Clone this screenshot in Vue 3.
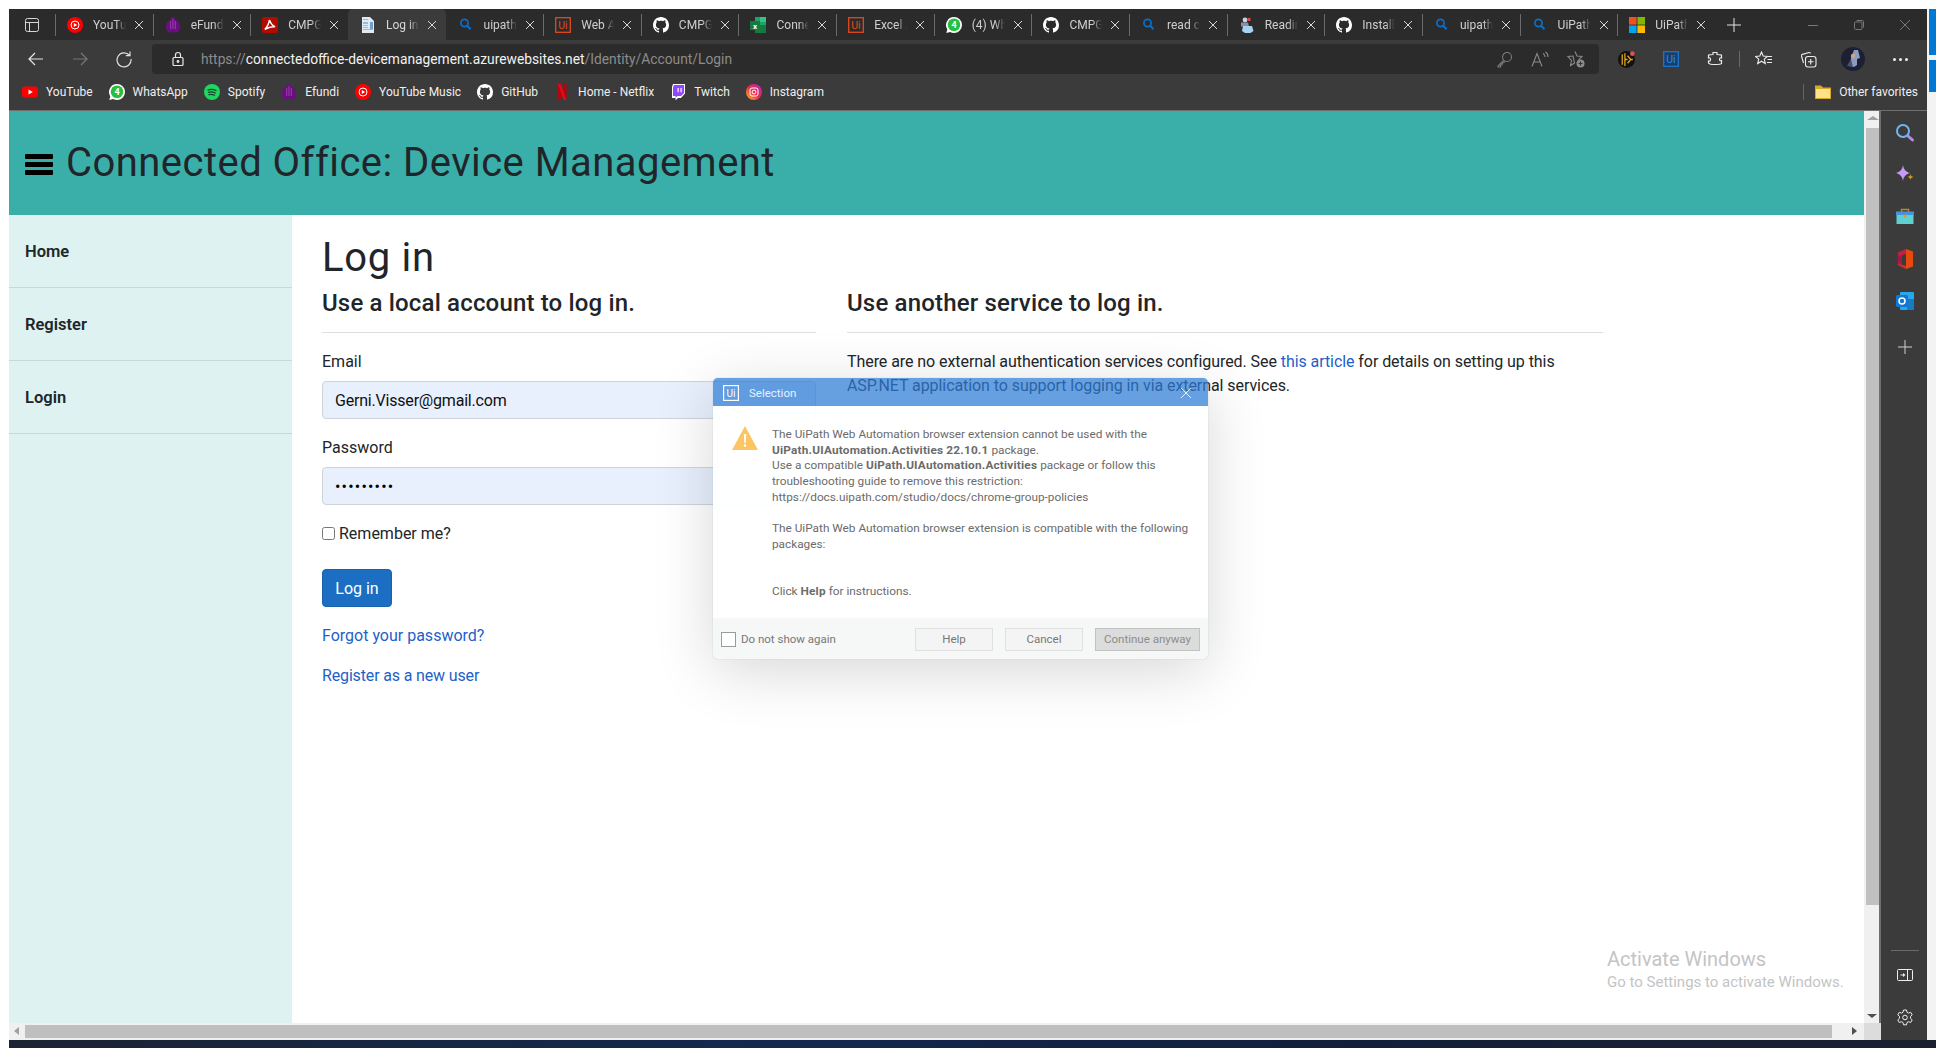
<script setup>
const gh = '<path fill="#fff" d="M8 0C3.58 0 0 3.58 0 8c0 3.54 2.29 6.53 5.47 7.59.4.07.55-.17.55-.38 0-.19-.01-.82-.01-1.49-2.01.37-2.53-.49-2.69-.94-.09-.23-.48-.94-.82-1.13-.28-.15-.68-.52-.01-.53.63-.01 1.08.58 1.23.82.72 1.21 1.87.87 2.33.66.07-.52.28-.87.51-1.07-1.78-.2-3.64-.89-3.64-3.95 0-.87.31-1.59.82-2.15-.08-.2-.36-1.02.08-2.12 0 0 .67-.21 2.2.82.64-.18 1.32-.27 2-.27.68 0 1.36.09 2 .27 1.53-1.04 2.2-.82 2.2-.82.44 1.1.16 1.92.08 2.12.51.56.82 1.27.82 2.15 0 3.07-1.87 3.75-3.65 3.95.29.25.54.73.54 1.48 0 1.07-.01 1.93-.01 2.2 0 .21.15.46.55.38A8.013 8.013 0 0016 8c0-4.42-3.58-8-8-8z"/>'
const icons = {
  ytm: '<circle cx="8" cy="8" r="8" fill="#f00"/><circle cx="8" cy="8" r="4" fill="none" stroke="#fff"/><path fill="#fff" d="M6.8 5.9 10.2 8l-3.4 2.1z"/>',
  yt: '<rect y="2.5" width="16" height="11" rx="3" fill="#f00"/><path fill="#fff" d="M6.5 5.5 10.8 8l-4.3 2.5z"/>',
  efundi: '<path fill="#6a0f80" d="M8 0c1.6 0 2.5 1.5 2.5 3.3 2.4.2 4 2 4.5 5 .5 3.2-.6 6.700-3.200 7.200-1.400.3-2.800-.2-3.800-1.200-1 1-2.400 1.500-3.800 1.200C2.100 15 .5 11.500 1 8.300c.5-3 2.100-4.800 4.500-5C5.500 1.500 6.400 0 8 0z"/><path stroke="#a24bb5" stroke-width=".8" fill="none" d="M5.700 4v8M8 2v10M10.300 4v8"/>',
  pdf: '<rect width="16" height="16" rx="2" fill="#b30b00"/><path fill="none" stroke="#fff" stroke-width="1.500" d="M7.400 3c-.2 2.700-2 6.500-4.600 9.400 3-1.900 7.300-3 10.300-2.600C10.600 8.800 8.600 6 7.400 3z"/>',
  doc: '<path fill="#dfeaf5" d="M2 0h8l4 4v12H2z"/><path fill="#9db9d8" d="M3 2h5v1H3zM3 5h5v2H3zM3 8h5v1H3zM3 10h5v1H3zM3 12h10v1H3z"/><path fill="#6f9fd0" d="M10 5h3v7h-3z"/>',
  search: '<circle cx="6.500" cy="6" r="3.600" fill="none" stroke="#0a6fc9" stroke-width="1.700"/><path stroke="#0a6fc9" stroke-width="2" d="m9.200 8.800 3.300 3.400"/>',
  ui: '<rect x=".7" y=".7" width="14.600" height="14.600" fill="none" stroke="#e3491d" stroke-width="1.300"/><text x="8" y="12" font-size="10.500" text-anchor="middle" fill="#e3491d" font-family="Roboto, sans-serif">Ui</text>',
  github: gh,
  excel: '<path fill="#21a366" d="M5 0h11v16H5z"/><path fill="#107c41" d="M5 8h11v8H5z"/><path fill="#33c481" d="M10 0h6v5h-6z"/><rect y="4" width="10" height="9" fill="#107c41"/><text x="5" y="11.500" font-size="8" font-weight="700" text-anchor="middle" fill="#fff" font-family="Roboto, sans-serif">x</text>',
  wa: '<path fill="#fff" d="M8 0a8 8 0 0 1 0 16c-1.400 0-2.700-.4-3.900-1L.3 16l1-3.700A8 8 0 0 1 8 0z"/><circle cx="8" cy="7.800" r="6.300" fill="#25c03d"/><text x="8" y="11" font-size="9" font-weight="700" text-anchor="middle" fill="#fff" font-family="Roboto, sans-serif">4</text>',
  reading: '<circle cx="6" cy="3" r="2.400" fill="#c9d4e2"/><path fill="#8a8fa3" d="M2 5.500h7l1 4H2z"/><path fill="#d94b4b" d="M8.500 1h3v3h-3z"/><path fill="#a7d3f2" d="M4 9h9l1.500 5-3 2H6l-3-2z"/>',
  ms: '<path fill="#f25022" d="M0 0h7.600v7.600H0z"/><path fill="#7fba00" d="M8.400 0H16v7.600H8.400z"/><path fill="#00a4ef" d="M0 8.400h7.600V16H0z"/><path fill="#ffb900" d="M8.400 8.400H16V16H8.400z"/>',
  spotify: '<circle cx="8" cy="8" r="8" fill="#1ed760"/><path fill="none" stroke="#15432a" stroke-width="1.300" stroke-linecap="round" d="M4 5.800c2.700-.8 5.600-.6 8 .7M4.500 8.300c2.300-.6 4.700-.4 6.800.7M5 10.600c1.900-.5 3.800-.3 5.500.6"/>',
  netflix: '<path fill="#b1060f" d="M4 0h3v16l-3 .4z"/><path fill="#b1060f" d="M9.500 0h3v16.400l-3-.4z"/><path fill="#e50914" d="M4 0h3l5.500 16.400-3-.4z"/>',
  twitch: '<path fill="#fff" d="M3 0h12v9.500L11 14H8l-2.500 2.300V14H2V3z"/><path fill="#9146ff" d="M4 1h10v8l-3 3H7.500l-2 1.700V12H3V3.500zM7.500 4v4.300h1.200V4zm3 0v4.300h1.200V4z"/>',
  ig: '<defs><linearGradient id="igg" x1="0" y1="1" x2="1" y2="0"><stop offset="0" stop-color="#fdc21f"/><stop offset=".5" stop-color="#f0264f"/><stop offset="1" stop-color="#a02fc9"/></linearGradient></defs><circle cx="8" cy="8" r="8" fill="url(#igg)"/><rect x="4" y="4" width="8" height="8" rx="2" fill="none" stroke="#fff"/><circle cx="8" cy="8" r="1.900" fill="none" stroke="#fff"/>',
}

const tabs = [
  { icon: 'ytm', title: 'YouTube' },
  { icon: 'efundi', title: 'eFundi' },
  { icon: 'pdf', title: 'CMPG 323' },
  { icon: 'doc', title: 'Log in - Connected', active: true },
  { icon: 'search', title: 'uipath web' },
  { icon: 'ui', title: 'Web Automation' },
  { icon: 'github', title: 'CMPG-323' },
  { icon: 'excel', title: 'Connected' },
  { icon: 'ui', title: 'Excel Automation' },
  { icon: 'wa', title: '(4) WhatsApp' },
  { icon: 'github', title: 'CMPG-323' },
  { icon: 'search', title: 'read cell' },
  { icon: 'reading', title: 'Reading' },
  { icon: 'github', title: 'Install' },
  { icon: 'search', title: 'uipath ext' },
  { icon: 'search', title: 'UiPath ext' },
  { icon: 'ms', title: 'UiPath Web' },
]

const bookmarks = [
  { icon: 'yt', label: 'YouTube' },
  { icon: 'wa', label: 'WhatsApp' },
  { icon: 'spotify', label: 'Spotify' },
  { icon: 'efundi', label: 'Efundi' },
  { icon: 'ytm', label: 'YouTube Music' },
  { icon: 'github', label: 'GitHub' },
  { icon: 'netflix', label: 'Home - Netflix' },
  { icon: 'twitch', label: 'Twitch' },
  { icon: 'ig', label: 'Instagram' },
]

const navLinks = ['Home', 'Register', 'Login']
</script>

<template>
  <div class="screen">
    <div class="window">
      <div class="tabstrip">
        <div class="tab-actions">
          <svg width="16" height="16" viewBox="0 0 16 16" fill="none" stroke="#d6d6d6"><rect x="1.500" y="1.500" width="13" height="13" rx="2"/><path d="M1.500 5.500h13M5.500 5.500v9"/></svg>
        </div>
        <div v-for="(t, i) in tabs" :key="i" class="tab" :class="{ active: t.active }">
          <svg class="tab-icon" width="16" height="16" viewBox="0 0 16 16" v-html="icons[t.icon]"></svg>
          <span class="tab-title">{{ t.title }}</span>
          <svg class="tab-close" width="10" height="10" viewBox="0 0 10 10" stroke="#d8d8d8"><path d="M1 1l8 8M9 1l-8 8"/></svg>
        </div>
        <svg class="new-tab" width="16" height="16" viewBox="0 0 16 16" stroke="#e4e4e4"><path d="M8 1v14M1 8h14"/></svg>
        <div class="win-controls">
          <svg width="12" height="12" viewBox="0 0 12 12" stroke="#777"><path d="M1 6.500h10"/></svg>
          <svg width="12" height="12" viewBox="0 0 12 12" stroke="#777" fill="none"><rect x="1.500" y="3" width="7.500" height="7.500" rx="1"/><path d="M3.500 1.500h6a1 1 0 0 1 1 1v6"/></svg>
          <svg width="12" height="12" viewBox="0 0 12 12" stroke="#777"><path d="M1 1l10 10M11 1L1 11"/></svg>
        </div>
      </div>

      <div class="toolbar">
        <div class="nav-buttons">
          <svg width="18" height="18" viewBox="0 0 18 18" fill="none" stroke="#e6e6e6" stroke-width="1.200"><path d="M16 9H2M8 3 2 9l6 6"/></svg>
          <svg width="18" height="18" viewBox="0 0 18 18" fill="none" stroke="#777" stroke-width="1.200"><path d="M2 9h14M10 3l6 6-6 6"/></svg>
          <svg width="18" height="18" viewBox="0 0 18 18" fill="none" stroke="#e0e0e0" stroke-width="1.200"><path d="M14.500 5.500A7 7 0 1 0 16 9M15 1.500v4.200h-4.200"/></svg>
        </div>
        <div class="address">
          <svg width="14" height="16" viewBox="0 0 14 16" fill="none" stroke="#e8e8e8" stroke-width="1.200"><rect x="2" y="6.500" width="10" height="8" rx="1"/><path d="M4.500 6.500V4a2.500 2.500 0 0 1 5 0v2.500"/><circle cx="7" cy="10.500" r=".8" fill="#e8e8e8"/></svg>
          <div class="url"><span class="dim">https://</span>connectedoffice-devicemanagement.azurewebsites.net<span class="dim">/Identity/Account/Login</span></div>
          <div class="address-icons">
            <svg width="17" height="17" viewBox="0 0 17 17" fill="none" stroke="#7d7d7d" stroke-width="1.100"><circle cx="11" cy="6" r="4.500"/><path d="M7.800 9.200 2 15v1h2.500v-2H6v-1.500l3-2"/></svg>
            <svg width="18" height="17" viewBox="0 0 18 17" fill="none" stroke="#8a8a8a" stroke-width="1.100"><path d="M1 15.500 6 2.500l5 13M3 11h6M12 2.500c1.400.7 2.100 1.900 2 3.500M14.500 1c1.800 1.100 2.600 2.700 2.400 5"/></svg>
            <svg width="18" height="18" viewBox="0 0 18 18" fill="none" stroke="#8a8a8a" stroke-width="1.100"><path d="M8 1.500 10 6l5 .5-3.500 3.300M7.500 13l-4 2.500 1-5L1 6.500 6 6z"/><circle cx="13.500" cy="13.500" r="4" fill="#8a8a8a" stroke="none"/><path stroke="#333" d="M13.500 11.500v4M11.500 13.500h4"/></svg>
          </div>
        </div>
        <div class="tool-icons">
          <svg class="t1" width="17" height="17" viewBox="0 0 16 16"><circle cx="8" cy="8" r="8" fill="#111"/><path fill="none" stroke="#e0a81c" stroke-width="1.200" d="M4 3v10M6.500 2v12M9 8 6.500 8M9 4.500 12 8l-3 3.500M12 8h2"/><circle cx="13.500" cy="2.500" r="2.200" fill="#e64a5b"/></svg>
          <svg class="t2" width="16" height="16" viewBox="0 0 16 16"><rect x=".7" y=".7" width="14.600" height="14.600" fill="#1c3d66" stroke="#1976d2" stroke-width="1.300"/><text x="8" y="12" font-size="10.500" text-anchor="middle" fill="#2b8af0" font-family="Roboto, sans-serif">Ui</text></svg>
          <svg class="t3" width="16" height="16" viewBox="0 0 16 16" fill="none" stroke="#ececec" stroke-width="1.200"><path d="M6 1.500h4v2c2 0 3.500 0 4.500.5v3c-1.500-.5-2 .3-2 1.300s.5 1.800 2 1.300v3c-1 .8-2.500.9-4.500.9H6c-2 0-3.500-.5-4.500-1.400V10c1.500.5 2-.3 2-1.500S3 6.500 1.500 7V4c1-.5 2.500-.5 4.500-.5z"/></svg>
          <span class="tool-sep"></span>
          <svg class="t4" width="18" height="16" viewBox="0 0 18 16" fill="none" stroke="#ececec" stroke-width="1.100"><path d="M6.500 1 8.200 5l4.300.4-3.200 2.800 1 4.300L6.500 10.200 2.700 12.500l1-4.300L.5 5.400 4.800 5zM13 5.500h4M12.500 8.500h4.500M12 11.500h5"/></svg>
          <svg class="t5" width="17" height="17" viewBox="0 0 17 17" fill="none" stroke="#ececec" stroke-width="1.100"><rect x="5.500" y="5.500" width="10.500" height="10.500" rx="2.500"/><path d="M10.700 8v5.500M8 10.700h5.500M3.500 12 1.500 5c-.2-.8.200-1.400.9-1.600L9 1.500c.7-.2 1.300.2 1.500 1"/></svg>
          <svg class="t6" width="24" height="24" viewBox="0 0 24 24"><circle cx="12" cy="12" r="12" fill="#1d1f33"/><path fill="#8f9cc2" d="M13 3h4l2 8-3 1v6l-3 2-4-1 1-8z"/><circle cx="12" cy="9" r="2.200" fill="#c9a78f"/><path fill="#4a5270" d="M6 19l4-7 2 8z"/></svg>
          <div class="dots"><i></i><i></i><i></i></div>
        </div>
      </div>

      <div class="bookmarks">
        <div v-for="b in bookmarks" :key="b.label" class="bookmark">
          <svg width="16" height="16" viewBox="0 0 16 16" v-html="icons[b.icon]"></svg>
          <span>{{ b.label }}</span>
        </div>
        <span class="fav-sep"></span>
        <div class="bookmark other">
          <svg width="16" height="16" viewBox="0 0 16 16"><path fill="#d9a72c" d="M0 1.500h6l2 2h8v11.500H0z"/><path fill="#fde28a" d="M1 5h14v9H1z"/></svg>
          <span>Other favorites</span>
        </div>
      </div>

      <div class="stage">
        <div class="viewport">
          <div class="view-row">
            <div class="page">
              <header class="app-header">
                <div class="burger"><i></i><i></i><i></i></div>
                <h1 class="app-title">Connected Office: Device Management</h1>
              </header>
              <div class="page-body">
                <nav class="side-nav">
                  <a v-for="n in navLinks" :key="n" class="nav-link">{{ n }}</a>
                </nav>
                <main class="content">
                  <h1 class="page-title">Log in</h1>
                  <div class="columns">
                    <section class="col-left">
                      <h4>Use a local account to log in.</h4>
                      <hr />
                      <label class="field-label">Email</label>
                      <div class="field email">Gerni.Visser@gmail.com</div>
                      <label class="field-label">Password</label>
                      <div class="field pass">•••••••••</div>
                      <label class="remember"><input type="checkbox" /> Remember me?</label>
                      <button class="btn-login">Log in</button>
                      <a class="link forgot">Forgot your password?</a>
                      <a class="link register">Register as a new user</a>
                    </section>
                    <section class="col-right">
                      <h4>Use another service to log in.</h4>
                      <hr />
                      <p>There are no external authentication services configured. See <a class="link inline">this article</a> for details on setting up this ASP.NET application to support logging in via external services.</p>
                    </section>
                  </div>
                </main>
              </div>
            </div>
            <div class="vscroll">
              <span class="arrow up"></span>
              <div class="vthumb"></div>
              <span class="arrow down"></span>
            </div>
          </div>
          <div class="hscroll">
            <span class="arrow left"></span>
            <div class="hthumb"></div>
            <span class="arrow right"></span>
            <div class="corner"></div>
          </div>
        </div>

        <aside class="edge-bar">
          <svg width="20" height="20" viewBox="0 0 20 20" fill="none"><circle cx="8" cy="8" r="6" stroke="#6fb6f2" stroke-width="2"/><path stroke="#b48ce8" stroke-width="3" stroke-linecap="round" d="m13 13 4.500 4"/></svg>
          <svg width="20" height="20" viewBox="0 0 20 20"><path fill="#c59bf5" d="M8 0c.7 4.500 2.500 6.500 7 8-4.500 1.500-6.300 3.500-7 8-.7-4.500-2.500-6.500-7-8 4.500-1.500 6.300-3.500 7-8z"/><path fill="#d19a1a" d="M15.500 9c.2 1.700 1 2.500 3 3-2 .5-2.800 1.300-3 3-.2-1.700-1-2.500-3-3 2-.5 2.800-1.300 3-3z"/></svg>
          <svg width="20" height="20" viewBox="0 0 20 20"><path fill="none" stroke="#b78a2c" stroke-width="1.500" d="M6.500 5V2.500h7V5"/><path fill="#5fd0d2" d="M1.500 8h17v9h-17z"/><path fill="#4a90e0" d="M1 4.500h18V8H1z"/><circle cx="10" cy="9" r="1.500" fill="#e69a1c"/></svg>
          <svg width="20" height="20" viewBox="0 0 20 20"><path fill="#e64a0c" d="M11 0l7 2.500v15L11 20z"/><path fill="#c41e4a" d="M11 0 3 3.500v12l4-1.500V6l4-1z"/><path fill="#8f1440" d="M2 6v8l5-1V7z" opacity=".6"/><path fill="#e02a2a" d="M2 15.500 11 20v-3l-6-2z"/></svg>
          <svg width="20" height="20" viewBox="0 0 20 20"><rect x="5" y="1" width="14" height="18" rx="1" fill="#28a8ea"/><path fill="#0a5fa8" d="M12 8h7v11h-7z" opacity=".6"/><rect x="1" y="4" width="12" height="12" rx="1.500" fill="#0f78d4"/><circle cx="7" cy="10" r="3" fill="none" stroke="#fff" stroke-width="1.500"/></svg>
          <svg class="edge-plus" width="14" height="14" viewBox="0 0 14 14" stroke="#d0d0d0"><path d="M7 0v14M0 7h14"/></svg>
          <div class="edge-bottom">
            <span class="edge-rule"></span>
            <svg width="16" height="14" viewBox="0 0 16 14" fill="none" stroke="#eee"><rect x=".5" y="1.500" width="15" height="11" rx="1"/><path d="M10.500 1.500v11"/><path fill="#eee" d="M3.500 6.500h2.500V5l2.500 2-2.500 2V7.500H3.500z" stroke="none"/></svg>
            <svg width="18" height="18" viewBox="0 0 18 18" fill="none" stroke="#eee"><path d="M7.500 1h3l.5 2.300 1.500.8 2.200-.8 1.500 2.600-1.700 1.600v1.800l1.700 1.600-1.500 2.600-2.200-.8-1.500.8-.5 2.300h-3L7 13.500l-1.500-.8-2.200.8-1.500-2.600 1.700-1.600V7.500L1.800 5.900l1.500-2.600 2.200.8L7 3.300z"/><circle cx="9" cy="8.500" r="2.300"/></svg>
          </div>
        </aside>
      </div>
    </div>

    <div class="desktop-edge"><i></i><i></i></div>
    <div class="taskbar"></div>

    <div class="watermark">
      <div class="wm-title">Activate Windows</div>
      <div class="wm-sub">Go to Settings to activate Windows.</div>
    </div>

    <div class="dialog">
      <div class="dlg-title">
        <svg width="16" height="16" viewBox="0 0 16 16"><rect x=".6" y=".6" width="14.800" height="14.800" fill="none" stroke="#fff" stroke-width="1.200"/><text x="8" y="12" font-size="10" text-anchor="middle" fill="#fff" font-family="Roboto, sans-serif">Ui</text></svg>
        <span>Selection</span>
        <svg class="dlg-close" width="12" height="12" viewBox="0 0 12 12" stroke="#fff" opacity=".85"><path d="M1 1l10 10M11 1L1 11"/></svg>
      </div>
      <div class="dlg-body">
        <svg class="warn" width="26" height="24" viewBox="0 0 26 24"><path fill="#fcc562" d="M13 0 26 24H0z"/><path fill="#fff" d="M11.800 8h2.400l-.5 9h-1.400zM13 18.200a1.300 1.300 0 1 1 0 2.600 1.300 1.300 0 0 1 0-2.600z"/></svg>
        <div class="dlg-text">
          <p>The UiPath Web Automation browser extension cannot be used with the<br /><b>UiPath.UIAutomation.Activities 22.10.1</b> package.<br />Use a compatible <b>UiPath.UIAutomation.Activities</b> package or follow this<br />troubleshooting guide to remove this restriction:<br />https://docs.uipath.com/studio/docs/chrome-group-policies</p>
          <p class="gap1">The UiPath Web Automation browser extension is compatible with the following<br />packages:</p>
          <p class="gap2">Click <b>Help</b> for instructions.</p>
        </div>
      </div>
      <div class="dlg-footer">
        <span class="dlg-check"></span>
        <span class="dlg-check-label">Do not show again</span>
        <button class="dlg-btn help">Help</button>
        <button class="dlg-btn">Cancel</button>
        <button class="dlg-btn wide">Continue anyway</button>
      </div>
    </div>
  </div>
</template>

<style>
html, body { margin: 0; background: #fff; overflow: hidden; }
</style>

<style scoped>
.screen {
  position: relative;
  width: 1936px;
  height: 1048px;
  overflow: hidden;
  background: #fff;
  display: grid;
  grid-template-columns: 1918px 9px;
  grid-template-rows: 1031px 8px;
  padding: 9px 0 0 9px;
  box-sizing: border-box;
  font-family: Roboto, "Noto Sans", sans-serif;
  color: #212529;
}
.window { display: flex; flex-direction: column; background: #3b3b3b; min-height: 0; }

/* tabs */
.tabstrip { height: 31px; background: #2b2b2b; display: flex; align-items: center; position: relative; }
.tab-actions { width: 46px; display: flex; padding-left: 15px; box-sizing: border-box; }
.tab {
  width: 97.65px;
  height: 22px;
  flex: none;
  display: flex;
  align-items: center;
  box-sizing: border-box;
  padding-left: 11px;
  border-left: 1px solid #6a6a6a;
  color: #cfcfcf;
  font-size: 12px;
  position: relative;
}
.tab.active { background: #3b3b3b; height: 31px; border-radius: 5px 5px 0 0; border-left-color: transparent; color: #d8d8d8; }
.tab.active + .tab { border-left-color: transparent; }
.tab-icon { flex: none; }
.tab-title {
  margin-left: 10px;
  width: 33px;
  white-space: nowrap;
  overflow: hidden;
  -webkit-mask-image: linear-gradient(to right, #000 70%, transparent);
  mask-image: linear-gradient(to right, #000 70%, transparent);
}
.tab-close { margin-left: 8px; flex: none; }
.new-tab { margin-left: 11px; box-shadow: -11px 0 0 -10px #6a6a6a; }
.win-controls { position: absolute; left: 1798px; top: 10px; display: flex; gap: 34px; }

/* toolbar */
.toolbar { height: 34px; display: flex; align-items: flex-end; }
.nav-buttons { width: 143px; height: 30px; display: flex; align-items: center; gap: 26px; padding-left: 18px; box-sizing: border-box; }
.address {
  width: 1447px;
  height: 30px;
  background: #2b2b2b;
  border-radius: 4px;
  display: flex;
  align-items: center;
  padding-left: 19px;
  box-sizing: border-box;
}
.url { margin-left: 16px; font-size: 13.8px; color: #f2f2f2; white-space: nowrap; }
.dim { color: #8c8c8c; }
.address-icons { margin-left: auto; display: flex; align-items: center; gap: 18px; padding-right: 14px; }
.tool-icons { flex: 1; height: 30px; display: flex; align-items: center; position: relative; }
.t1 { margin-left: 19px; }
.t2 { margin-left: 28px; }
.t3 { margin-left: 28px; }
.tool-sep { width: 1px; height: 16px; background: #6a6a6a; margin-left: 16px; }
.t4 { margin-left: 15px; }
.t5 { margin-left: 27px; }
.t6 { margin-left: 24px; }
.dots { display: flex; gap: 3px; margin-left: 28px; }
.dots i { width: 3px; height: 3px; border-radius: 50%; background: #eee; }

/* favorites */
.bookmarks {
  height: 37px;
  display: flex;
  align-items: center;
  padding-left: 13px;
  gap: 16px;
  box-sizing: border-box;
  border-bottom: 1px solid #6f6f6f;
  font-size: 12px;
  color: #efefef;
}
.bookmark { display: flex; align-items: center; gap: 8px; white-space: nowrap; }
.fav-sep { width: 1px; height: 16px; background: #666; margin-left: auto; }
.bookmark.other { margin-left: -5px; margin-right: 9px; gap: 8px; }

/* viewport */
.stage { flex: 1; display: flex; min-height: 0; }
.viewport { width: 1872px; display: flex; flex-direction: column; background: #fff; }
.view-row { flex: 1; display: flex; min-height: 0; }
.page { flex: 1; display: flex; flex-direction: column; min-width: 0; }
.app-header { height: 104px; background: #3aafa9; display: flex; align-items: center; padding-left: 16px; flex: none; box-sizing: border-box; }
.burger { width: 28px; display: flex; flex-direction: column; gap: 3.5px; margin-right: 13px; margin-top: 3px; }
.burger i { display: block; height: 4.500px; border-radius: 1px; background: #000; }
.app-title { margin: 0; font-size: 40px; font-weight: 400; line-height: 48px; color: #212529; letter-spacing: .46px; white-space: nowrap; }
.page-body { flex: 1; display: flex; min-height: 0; }
.side-nav { width: 283px; background: #def2f1; display: flex; flex-direction: column; flex: none; }
.nav-link {
  height: 73px;
  box-sizing: border-box;
  border-bottom: 1px solid #c6d9d8;
  padding: 1px 0 0 16px;
  display: flex;
  align-items: center;
  font-size: 16.500px;
  font-weight: 600;
  color: #212529;
}
.content { flex: 1; padding: 19px 0 0 30px; }
.page-title { margin: 0 0 7px; font-size: 40px; line-height: 48px; font-weight: 400; letter-spacing: .7px; }
.columns { display: flex; gap: 31px; }
.col-left { width: 494px; display: flex; flex-direction: column; align-items: flex-start; }
.col-right { width: 756px; }
h4 { margin: 0; font-size: 24px; line-height: 29px; font-weight: 500; letter-spacing: .17px; }
hr { width: 100%; margin: 14px 0 17px; border: 0; border-top: 1px solid #dedede; }
.field-label { font-size: 16px; line-height: 24px; margin-bottom: 7px; }
.field {
  width: 100%;
  height: 38px;
  box-sizing: border-box;
  background: #e8f0fe;
  border: 1px solid #ced4da;
  border-radius: 4px;
  padding: 0 12px;
  display: flex;
  align-items: center;
  font-size: 16px;
  margin-bottom: 17px;
  color: #111;
}
.field.email { letter-spacing: -.2px; }
.field.pass { letter-spacing: 1.200px; color: #000; }
.remember { font-size: 16px; line-height: 24px; display: flex; align-items: center; gap: 4px; }
.remember input { width: 13px; height: 13px; margin: 0 0 2px; }
.btn-login {
  margin-top: 23px;
  width: 70px;
  height: 38px;
  background: #1b6ec2;
  color: #fff;
  border: 1px solid #1861ac;
  border-radius: 4px;
  font-family: inherit;
  font-size: 16px;
}
.link { color: #1f5fc9; font-size: 16px; line-height: 24px; }
.forgot { margin-top: 17px; }
.register { margin-top: 16px; letter-spacing: -.15px; }
.col-right p { margin: 0; font-size: 16px; line-height: 24px; letter-spacing: -.07px; }
.inline { font-size: inherit; }

/* scrollbars */
.vscroll { width: 17px; background: #f0f0f0; border-right: 2px solid #6f6f6f; box-sizing: border-box; position: relative; flex: none; }
.vthumb { position: absolute; left: 2px; top: 17px; width: 13px; height: 777px; background: #c0c0c0; }
.arrow { position: absolute; width: 0; height: 0; border: 4px solid transparent; }
.arrow.up { left: 3px; top: 5px; border-width: 0 6px 4px; border-bottom-color: #a0a0a0; }
.arrow.down { left: 3px; bottom: 5px; border-width: 4px 5px 0; border-top-color: #505050; }
.hscroll { height: 17px; background: #f0f0f0; position: relative; flex: none; }
.hthumb { position: absolute; left: 16px; top: 2px; width: 1807px; height: 13px; background: #bfbfbf; }
.arrow.left { left: 5px; top: 4px; border-width: 4px 5px 4px 0; border-right-color: #a0a0a0; }
.arrow.right { left: 1843px; top: 4px; border-width: 4px 0 4px 5px; border-left-color: #505050; }
.corner { position: absolute; right: 0; top: 0; width: 17px; height: 17px; background: #dcdcdc; }

/* edge sidebar */
.edge-bar { flex: 1; background: #3b3b3b; display: flex; flex-direction: column; align-items: center; padding: 12px 0 0 2px; gap: 22px; box-sizing: border-box; }
.edge-plus { margin-top: 7px; }
.edge-bottom { margin-top: auto; display: flex; flex-direction: column; align-items: center; padding-bottom: 13px; }
.edge-rule { width: 28px; height: 1px; background: #6a6a6a; margin-bottom: 17px; }
.edge-bottom svg:last-child { margin-top: 27px; }

/* desktop bits around the window */
.desktop-edge { display: flex; flex-direction: column; background: #f3f3f3; }
.desktop-edge i { display: block; margin-left: 2px; background: #0078d4; }
.desktop-edge i:first-child { height: 46px; }
.desktop-edge i:last-child { height: 32px; margin-top: 5px; }
.taskbar { grid-column: 1 / -1; background: linear-gradient(to right, #1b2433, #14284f 40%, #131f3a 70%, #1a2030); }

/* overlays */
.watermark { position: absolute; left: 1607px; top: 946px; color: #c4c4c4; pointer-events: none; }
.wm-title { font-size: 20px; line-height: 26px; }
.wm-sub { font-size: 15px; line-height: 20px; }

.dialog {
  position: absolute;
  left: 713px;
  top: 378px;
  width: 495px;
  height: 281px;
  display: flex;
  flex-direction: column;
  border-radius: 5px;
  overflow: hidden;
  box-shadow: 0 0 1px #8fa9c9, 0 12px 60px rgba(0, 0, 0, .16);
  color: #6b6b6b;
  font-size: 11.800px;
}
.dlg-title {
  height: 28px;
  flex: none;
  box-sizing: border-box;
  padding: 1px 0 0 10px;
  background: rgba(44, 124, 214, .72);
  display: flex;
  align-items: center;
  gap: 10px;
  color: #e8f1fb;
  position: relative;
  font-size: 11.500px;
}
.dlg-close { position: absolute; left: 467px; top: 9px; }
.dlg-body { flex: 1; background: rgba(255, 255, 255, .94); display: flex; min-height: 0; }
.warn { margin: 20px 0 0 19px; flex: none; }
.dlg-text { margin-left: 14px; padding-top: 21px; line-height: 15.700px; white-space: nowrap; }
.dlg-text p { margin: 0; }
.dlg-text b { letter-spacing: .2px; }
.gap1 { padding-top: 15.700px; }
.gap2 { padding-top: 31.500px; }
.dlg-footer {
  height: 41px;
  flex: none;
  box-sizing: border-box;
  padding: 1px 8px 0;
  background: #f6f7f7;
  display: flex;
  align-items: center;
}
.dlg-check { width: 13px; height: 13px; background: #fff; border: 1px solid #9a9a9a; flex: none; }
.dlg-check-label { margin-left: 5px; margin-right: auto; color: #777; font-size: 11.500px; }
.dlg-btn {
  width: 78px;
  height: 23px;
  margin-left: 12px;
  background: #f4f4f4;
  border: 1px solid #e0e0e0;
  color: #777;
  font-family: inherit;
  font-size: 11.500px;
  padding: 0;
}
.dlg-btn.wide { width: 105px; background: #dcdcdc; border-color: #c2c2c2; color: #8c8c8c; }
</style>
